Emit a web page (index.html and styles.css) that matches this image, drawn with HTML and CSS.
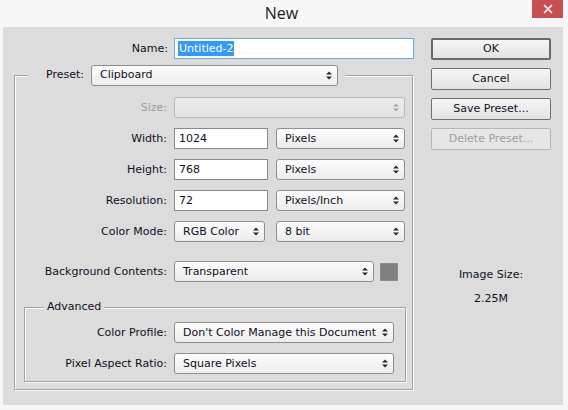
FILE: index.html
```html
<!DOCTYPE html>
<html lang="en">
<head>
<meta charset="utf-8">
<title>New</title>
<link rel="stylesheet" href="styles.css">
</head>
<body>
<div class="window">
  <header class="titlebar">
    <span class="spacer"></span>
    <h1 class="title">New</h1>
    <div class="close">
      <svg width="10" height="10" viewBox="0 0 10 10"><path d="M1 1L9 9M9 1L1 9" stroke="#fff" stroke-width="1.6" fill="none"/></svg>
    </div>
  </header>
  <main class="client">
    <section class="form">
      <div class="name-row">
        <span class="lbl name-lbl">Name:</span>
        <div class="field name-field"><span class="selected">Untitled-2</span></div>
      </div>
      <fieldset class="group outer">
        <legend class="preset-legend">
          <div class="legend-inner">
            <span class="lbl preset-lbl">Preset:</span>
            <div class="select preset"><span class="val">Clipboard</span><svg class="arrows" width="6" height="9" viewBox="0 0 6 9"><path d="M0 3.5L3 0.5L6 3.5ZM0 5.5L3 8.5L6 5.5Z"/></svg></div>
          </div>
        </legend>
        <div class="row">
          <span class="lbl w152 disabled">Size:</span>
          <div class="select size disabled"><span class="val"></span><svg class="arrows" width="6" height="9" viewBox="0 0 6 9"><path d="M0 3.5L3 0.5L6 3.5ZM0 5.5L3 8.5L6 5.5Z"/></svg></div>
        </div>
        <div class="row">
          <span class="lbl w152">Width:</span>
          <div class="field num">1024</div>
          <div class="select unit"><span class="val">Pixels</span><svg class="arrows" width="6" height="9" viewBox="0 0 6 9"><path d="M0 3.5L3 0.5L6 3.5ZM0 5.5L3 8.5L6 5.5Z"/></svg></div>
        </div>
        <div class="row">
          <span class="lbl w152">Height:</span>
          <div class="field num">768</div>
          <div class="select unit"><span class="val">Pixels</span><svg class="arrows" width="6" height="9" viewBox="0 0 6 9"><path d="M0 3.5L3 0.5L6 3.5ZM0 5.5L3 8.5L6 5.5Z"/></svg></div>
        </div>
        <div class="row">
          <span class="lbl w152">Resolution:</span>
          <div class="field num">72</div>
          <div class="select unit"><span class="val">Pixels/Inch</span><svg class="arrows" width="6" height="9" viewBox="0 0 6 9"><path d="M0 3.5L3 0.5L6 3.5ZM0 5.5L3 8.5L6 5.5Z"/></svg></div>
        </div>
        <div class="row">
          <span class="lbl w152">Color Mode:</span>
          <div class="select mode"><span class="val">RGB Color</span><svg class="arrows" width="6" height="9" viewBox="0 0 6 9"><path d="M0 3.5L3 0.5L6 3.5ZM0 5.5L3 8.5L6 5.5Z"/></svg></div>
          <div class="select unit"><span class="val">8 bit</span><svg class="arrows" width="6" height="9" viewBox="0 0 6 9"><path d="M0 3.5L3 0.5L6 3.5ZM0 5.5L3 8.5L6 5.5Z"/></svg></div>
        </div>
        <div class="row bg-row">
          <span class="lbl w152">Background Contents:</span>
          <div class="select bgc"><span class="val">Transparent</span><svg class="arrows" width="6" height="9" viewBox="0 0 6 9"><path d="M0 3.5L3 0.5L6 3.5ZM0 5.5L3 8.5L6 5.5Z"/></svg></div>
          <div class="swatch"></div>
        </div>
        <fieldset class="group advanced">
          <legend class="adv-legend">Advanced</legend>
          <div class="row">
            <span class="lbl w142">Color Profile:</span>
            <div class="select wide"><span class="val">Don't Color Manage this Document</span><svg class="arrows" width="6" height="9" viewBox="0 0 6 9"><path d="M0 3.5L3 0.5L6 3.5ZM0 5.5L3 8.5L6 5.5Z"/></svg></div>
          </div>
          <div class="row">
            <span class="lbl w142">Pixel Aspect Ratio:</span>
            <div class="select wide"><span class="val">Square Pixels</span><svg class="arrows" width="6" height="9" viewBox="0 0 6 9"><path d="M0 3.5L3 0.5L6 3.5ZM0 5.5L3 8.5L6 5.5Z"/></svg></div>
          </div>
        </fieldset>
      </fieldset>
    </section>
    <aside class="side">
      <div class="btn default">OK</div>
      <div class="btn">Cancel</div>
      <div class="btn">Save Preset...</div>
      <div class="btn disabled">Delete Preset...</div>
      <div class="info">
        <div class="info-line">Image Size:</div>
        <div class="info-line">2.25M</div>
      </div>
    </aside>
  </main>
</div>
</body>
</html>
```

FILE: styles.css
```css
* { box-sizing: border-box; }
html, body { margin: 0; padding: 0; }
body {
  background: #f7f7f7;
  font-family: "DejaVu Sans", Verdana, sans-serif;
  font-size: 11px;
  color: #10101c;
}
.window {
  width: 568px;
  height: 410px;
  background: #f7f7f7;
  display: flex;
  flex-direction: column;
}
.titlebar {
  height: 27px;
  display: grid;
  grid-template-columns: 1fr auto 1fr;
  padding-right: 5px;
}
.title {
  margin: 0;
  font-family: "Open Sans", "Noto Sans", sans-serif;
  font-weight: 400;
  font-size: 16px;
  line-height: 27px;
  color: #222;
}
.close {
  justify-self: end;
  width: 31px;
  height: 18px;
  background: #c75050;
  display: flex;
  align-items: center;
  justify-content: center;
}
.client {
  margin: 0 5px 0 3px;
  height: 378px;
  background: #dcdcdc;
  padding: 11px 12px 0 11px;
  display: grid;
  grid-template-columns: 400px 120px;
  column-gap: 17px;
  align-items: start;
}
.lbl {
  text-align: right;
  white-space: nowrap;
  line-height: 14px;
}
.disabled.lbl { color: #9c9c9c; }
.name-row {
  display: flex;
  align-items: center;
  gap: 6px;
  height: 21px;
}
.name-lbl { width: 154px; }
.field {
  height: 21px;
  background: #fff;
  border: 1px solid #8a8a8a;
  padding: 0 4px;
  line-height: 19px;
  white-space: nowrap;
}
.name-field {
  width: 240px;
  border-color: #6fa7e0;
  padding-left: 3px;
}
.selected {
  background: #3399ff;
  color: #fff;
  padding: 1px 1px;
}
.num { width: 94px; }

.group {
  margin: 0;
  min-inline-size: 0;
  border: 1px solid #a5a5a5;
  box-shadow: 1px 1px 0 #fafafa, inset 1px 1px 0 #fafafa;
}
.outer {
  width: 399px;
  margin-top: 6px;
  padding: 12px 6px 7px 0;
}
.preset-legend {
  margin-left: 13px;
  padding: 0 7px 0 18px;
  background: #dcdcdc;
}
.legend-inner {
  display: flex;
  align-items: center;
  gap: 7px;
  height: 20px;
}
.preset { width: 247px; height: 20px; }

.row {
  display: flex;
  align-items: center;
  height: 21px;
  margin-bottom: 10px;
}
.row:last-child { margin-bottom: 0; }
.bg-row { margin-top: 19px; margin-bottom: 0; }
.w152 { width: 152px; margin-right: 7px; }
.w142 { width: 142px; margin-right: 7px; }

.select {
  height: 21px;
  border: 1px solid #8f8f8f;
  border-radius: 3px;
  background: linear-gradient(#fdfdfd, #ececec);
  display: flex;
  align-items: center;
  justify-content: space-between;
  padding: 0 5px 0 8px;
  white-space: nowrap;
  line-height: 14px;
}
.select .arrows { fill: #2a2a2a; flex: none; }
.select.disabled {
  border-color: #b9b9b9;
  background: linear-gradient(#ececec, #e3e3e3);
}
.select.disabled .arrows { fill: #a8a8a8; }
.size { width: 231px; }
.unit { width: 129px; margin-left: 8px; }
.mode { width: 91px; }
.mode + .unit { margin-left: 11px; }
.bgc { width: 200px; }
.swatch {
  width: 18px;
  height: 18px;
  margin-left: 6px;
  background: #808080;
  border: 1px solid #8d8d8d;
}
.advanced {
  margin: 18px 0 0 9px;
  padding: 8px 10px 7px 0;
}
.adv-legend {
  margin-left: 19px;
  padding: 0 3px;
  line-height: 14px;
  background: #dcdcdc;
}
.wide { width: 220px; }

.side {
  display: flex;
  flex-direction: column;
  gap: 8px;
}
.btn {
  height: 22px;
  border: 1px solid #707070;
  border-radius: 2px;
  background: linear-gradient(#f6f6f6, #e3e3e3);
  text-align: center;
  line-height: 20px;
  white-space: nowrap;
}
.btn.default {
  border: 2px solid #6a6a6a;
  line-height: 18px;
}
.btn.disabled {
  border-color: #b6b6b6;
  background: #e6e6e6;
  color: #a0a0a0;
}
.info {
  margin-top: 110px;
  display: flex;
  flex-direction: column;
  gap: 10px;
  text-align: center;
}
.info-line { line-height: 14px; }
```
